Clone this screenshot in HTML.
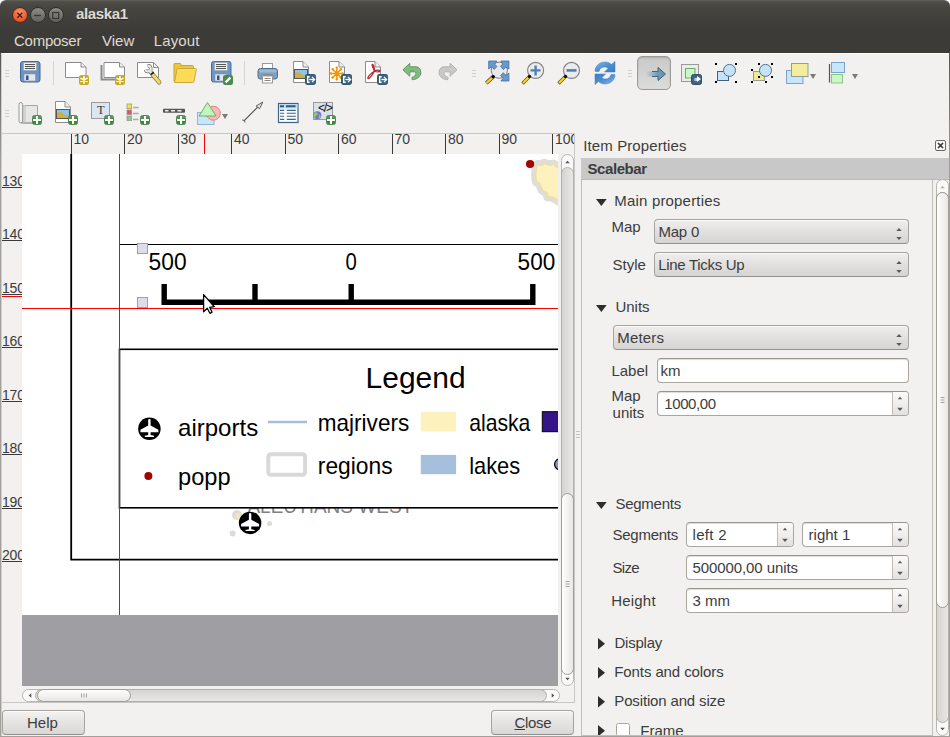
<!DOCTYPE html>
<html>
<head>
<meta charset="utf-8">
<title>alaska1</title>
<style>
html,body{margin:0;padding:0;}
body{width:950px;height:737px;overflow:hidden;position:relative;background:#f2f1f0;font-family:"Liberation Sans",sans-serif;font-size:15px;color:#3c3c3c;}
.abs,.abs *{position:absolute;}
div,span,svg{position:absolute;box-sizing:border-box;}
.t{white-space:nowrap;line-height:18px;}
/* title + menu */
#titlebar{left:0;top:0;width:950px;height:28px;background:linear-gradient(#fff 0,#fff 8px,#3d3c38 8px);}
#menubar{left:0;top:28px;width:950px;height:25px;background:#3c3b37;}
#cornerL{left:0;top:0;width:6px;height:6px;background:#1a1a18;}
#titlebar .r{left:0;top:0;width:950px;height:28px;border-radius:6px 6px 0 0;background:linear-gradient(#504f4a 0,#474641 20%,#3d3c38 100%);border-top:1px solid #5e5d58;}
.wbtn{width:16px;height:16px;border-radius:8px;top:6.500px;border:1px solid #2f2e2b;}
.mt{color:#dfdbd2;}
/* panel widgets */
.combo{height:25px;border:1px solid #a5a4a1;border-bottom-color:#929190;border-radius:4px;background:linear-gradient(#f0efee,#e3e2e1 45%,#d5d4d3);box-shadow:inset 0 1px 0 #fafafa;}
.edit{height:25px;border:1px solid #a9a6a0;border-top-color:#98958f;border-radius:4px;background:#fff;box-shadow:inset 0 1px 1px #dedbd7;}
.btn{height:25px;border:1px solid #a5a4a1;border-bottom-color:#929190;border-radius:4px;background:linear-gradient(#f4f3f2,#e6e5e4 45%,#d9d8d7);box-shadow:inset 0 1px 0 #fcfcfc;}

.hdl{width:4px;height:8px;background:linear-gradient(#cfcecb 0,#cfcecb 1px,transparent 1px,transparent 3px,#cfcecb 3px,#cfcecb 4px,transparent 4px,transparent 6px,#cfcecb 6px,#cfcecb 7px,transparent 7px);}
.sep{width:1px;height:24px;background:#d6d4d1;}
.bdg{width:10px;height:10px;border-radius:2.500px;}
.bdg::before,.bdg::after{content:"";position:absolute;}
.bdg.plus{background:linear-gradient(#5f9a5f,#468246 60%);border:1px solid #4a864a;}
.bdg.plus::before{left:3px;top:0;width:2px;height:8px;background:#fff;}
.bdg.plus::after{left:0;top:3px;width:8px;height:2px;background:#fff;}
.bdg.star{background:#c9a818;border:1px solid #b89810;}
.bdg.star::before{left:3.500px;top:1px;width:1.400px;height:6px;background:#fff;box-shadow:0 0 0 0 #fff;}
.bdg.star::after{left:1px;top:3.300px;width:6px;height:1.400px;background:#fff;}
.bdg.edit{height:25px;border:1px solid #a9a6a0;border-top-color:#98958f;border-radius:4px;background:#fff;box-shadow:inset 0 1px 1px #dedbd7;}
.bdg.edit::before{left:.5px;top:2.800px;width:7px;height:2.400px;background:#fff;transform:rotate(-45deg);}
.bdg.exp{width:11px;height:11px;background:#3f627e;border:1px solid #2f4e66;}
.bdg.exp::before{left:1.500px;top:2px;width:3px;height:5px;border:1.200px solid #fff;border-right:none;box-sizing:border-box;}
.bdg.exp::after{left:3.500px;top:3.900px;width:5px;height:1.200px;background:#fff;}
.bdg.mv{width:11px;height:11px;background:#3f627e;border:1px solid #2f4e66;}
.bdg.mv::before{left:1.500px;top:3px;width:4px;height:3px;background:linear-gradient(90deg,#7f9db5,#fff);}
.bdg.mv::after{left:5px;top:1px;width:0;height:0;border-left:4px solid #fff;border-top:3.500px solid transparent;border-bottom:3.500px solid transparent;}
.dd{width:0;height:0;border-left:3.500px solid transparent;border-right:3.500px solid transparent;border-top:5px solid #7c7b78;}
</style>
</head>
<body>

<div id="titlebar"><div class="r"></div>
<div class="wbtn" style="left:12px;background:radial-gradient(circle at 50% 30%,#f7936b,#ea5a30 65%,#d2451f);border-color:#5a2a1a"></div>
<div class="wbtn" style="left:30px;background:linear-gradient(#8d8c86,#62615c);"></div>
<div class="wbtn" style="left:48px;background:linear-gradient(#8d8c86,#62615c);"></div>
<svg style="left:12px;top:6.500px" width="54" height="17" viewBox="0 0 54 17"><path d="M5.300 5.800l5 5M10.300 5.800l-5 5" stroke="#4a1a0c" stroke-width="1.300"/><path d="M22 8.500h7" stroke="#3a3935" stroke-width="1.400"/><rect x="40.700" y="5.500" width="6" height="6" fill="none" stroke="#3a3935" stroke-width="1.300"/></svg>
<span class="t" style="left:76px;top:5px;font-size:15px;line-height:18px;color:#dfdbd2;font-weight:bold;letter-spacing:-0.35px;text-shadow:0 1px 0 #2a2926;">alaska1</span>
</div>
<div id="menubar">
<span class="t" style="left:14px;top:4px;font-size:15px;line-height:18px;color:#dfdbd2;letter-spacing:-0.25px;">Composer</span>
<span class="t" style="left:102px;top:4px;font-size:15px;line-height:18px;color:#dfdbd2;">View</span>
<span class="t" style="left:153.8px;top:4px;font-size:15px;line-height:18px;color:#dfdbd2;letter-spacing:0.1px;">Layout</span>
</div>

<div id="toolbars" style="left:0;top:53px;width:950px;height:80px;">
<!-- row 1 -->
<div class="hdl" style="left:5px;top:17px"></div>
<!-- save -->
<svg style="left:19px;top:7px" width="24" height="24" viewBox="0 0 24 24"><rect x="1.5" y="1.5" width="19.5" height="20.5" rx="2.5" fill="#6a94c6" stroke="#3d6a9e"/><rect x="4.5" y="2.5" width="13" height="8" fill="#eeeeec" stroke="#9aa0a8" stroke-width=".6"/><path d="M6 4.5h10M6 6.5h10M6 8.500h10" stroke="#555" stroke-width="1"/><rect x="5" y="14" width="11.500" height="7" fill="#e4e6ea" stroke="#8a95a5" stroke-width=".6"/><rect x="7" y="15.500" width="2.500" height="4.500" fill="#2f5688"/></svg>
<div class="sep" style="left:53px;top:8px"></div>
<!-- new composer -->
<svg style="left:64px;top:8px" width="26" height="26" viewBox="0 0 26 26"><path d="M1.500 1.500H17l5 4.500V16.500H1.500z" fill="#fff" stroke="#8c8c8c"/><path d="M17 1.500V6h5" fill="#eee" stroke="#8c8c8c"/></svg>
<svg style="left:79px;top:22px" width="10" height="10" viewBox="0 0 10 10"><rect width="10" height="10" rx="2.200" fill="#c9a91c"/><path d="M5 1.600V8.400M2 3.300L8 6.700M8 3.300L2 6.700" stroke="#fff" stroke-width="1.500" stroke-linecap="round"/></svg>
<!-- duplicate -->
<svg style="left:100px;top:8px" width="26" height="26" viewBox="0 0 26 26"><path d="M1.500 4V18.500H20" fill="none" stroke="#8c8c8c" stroke-width="2"/><path d="M4 1.500H19.500l5 4.500V16.500H4z" fill="#fff" stroke="#8c8c8c"/><path d="M19.500 1.500V6h5" fill="#eee" stroke="#8c8c8c"/></svg>
<svg style="left:115px;top:22px" width="10" height="10" viewBox="0 0 10 10"><rect width="10" height="10" rx="2.200" fill="#c9a91c"/><path d="M5 1.600V8.400M2 3.300L8 6.700M8 3.300L2 6.700" stroke="#fff" stroke-width="1.500" stroke-linecap="round"/></svg>
<!-- manager -->
<svg style="left:136px;top:8px" width="28" height="28" viewBox="0 0 28 28"><path d="M1.500 1.500H17.500l5 5V16.500H1.500z" fill="#fff" stroke="#8c8c8c"/><path d="M17.500 1.500V6.500h5z" fill="#f4f4f4" stroke="#8c8c8c" stroke-linejoin="round"/><path d="M16.500 13.500L23.200 21.300" stroke="#8a7a3a" stroke-width="4.400" stroke-linecap="round"/><path d="M16.800 13.800L23.200 21.300" stroke="#efd773" stroke-width="3" stroke-linecap="round"/><path d="M11.500 4.840A2.800 2.800 0 1 1 9.370 8.560" fill="none" stroke="#707070" stroke-width="3.400"/><path d="M13.500 9.500L16 12.800" stroke="#707070" stroke-width="4"/><path d="M11.500 4.840A2.800 2.800 0 1 1 9.370 8.560" fill="none" stroke="#eeeeee" stroke-width="2"/><path d="M13.600 9.600L16 12.600" stroke="#e4e4e4" stroke-width="2.600"/><path d="M14.800 13.600L17.800 11.200" stroke="#222" stroke-width="1.800"/></svg>
<!-- folder -->
<svg style="left:172px;top:8px" width="26" height="26" viewBox="0 0 26 26"><path d="M2 20.500V3.500q0-1 1-1h5q1 0 1 1V4.500h11.500q1 0 1 1V20.500z" fill="#eec63c" stroke="#c4a535"/><path d="M2.500 21.500L5 8.500q.2-1 1.200-1H23.500q1 0 .8 1L22 20.500q-.2 1-1.200 1z" fill="#fbdb58" stroke="#c9ab3a"/></svg>
<!-- save template -->
<svg style="left:210px;top:7px" width="24" height="24" viewBox="0 0 24 24"><rect x="1.500" y="1.500" width="19.500" height="20.500" rx="2" fill="#6b96c8" stroke="#46709f"/><rect x="4.500" y="2.500" width="13" height="8" fill="#eeeeec" stroke="#9aa0a8" stroke-width=".6"/><path d="M6 4.500h10M6 6.500h10M6 8.500h10" stroke="#555" stroke-width="1"/><rect x="5" y="14" width="11.500" height="7" fill="#e4e6ea" stroke="#8a95a5" stroke-width=".6"/><rect x="7" y="15.500" width="2.500" height="4.500" fill="#2f5688"/></svg>
<svg style="left:223px;top:22px" width="10" height="10" viewBox="0 0 10 10"><rect width="10" height="10" rx="2.200" fill="#4d894d"/><path d="M2.600 7.400L7.400 2.600" stroke="#fff" stroke-width="2.300" stroke-linecap="butt"/></svg>
<div class="sep" style="left:244px;top:8px"></div>
<!-- print -->
<svg style="left:256px;top:8px" width="24" height="24" viewBox="0 0 24 24"><rect x="6.500" y="2.500" width="10" height="7" fill="#fff" stroke="#999"/><rect x="2" y="7.500" width="19.500" height="10.500" rx="2.500" fill="#7da0be" stroke="#4a6f92"/><rect x="3" y="8.500" width="17.500" height="3" rx="1.500" fill="#9db9d2"/><rect x="6.500" y="13" width="10" height="4" fill="#8a8a8a"/><rect x="6.500" y="15" width="10" height="7" fill="#fff" stroke="#999"/><path d="M8.500 17.500h6M8.500 19.500h6" stroke="#888" stroke-width="1"/></svg>
<!-- export image -->
<svg style="left:292px;top:7px" width="20" height="24" viewBox="0 0 20 24"><path d="M1.500 1.500H11l5.500 5.500V22.500H1.500z" fill="#fff" stroke="#8c8c8c"/><path d="M11 1.500V7h5.500" fill="#eee" stroke="#8c8c8c"/><rect x="2" y="9" width="14" height="10" fill="#555"/><rect x="3" y="10" width="12" height="8" fill="#8ec4f0"/><path d="M3 18V13.500q2.500-3 5 -.5t7 2.500V18z" fill="#cdb044"/></svg>
<svg style="left:305px;top:21px" width="11" height="11" viewBox="0 0 11 11"><rect width="11" height="11" rx="2.400" fill="#315874"/><rect x="1" y="1" width="9" height="9" rx="1.500" fill="#3f6580"/><path d="M4.700 2.700H2.700V8.300H4.700" fill="none" stroke="#fff" stroke-width="1.400"/><path d="M4.300 5.500H9" stroke="#fff" stroke-width="1.300"/><path d="M7 3.100L9.600 5.500L7 7.900" fill="none" stroke="#fff" stroke-width="1.300"/></svg>
<!-- export svg -->
<svg style="left:328px;top:7px" width="20" height="24" viewBox="0 0 20 24"><path d="M1.500 1.500H11l5.500 5.500V22.500H1.500z" fill="#fff" stroke="#8c8c8c"/><path d="M11 1.500V7h5.500" fill="#eee" stroke="#8c8c8c"/><g stroke="#f0960a" stroke-width="1.500" stroke-linecap="round"><path d="M8.800 7.400v12M2.800 13.400h12M4.600 9.200l8.400 8.400M13 9.200l-8.400 8.400"/></g><g fill="#f0960a"><circle cx="8.800" cy="13.400" r="2"/><circle cx="8.800" cy="7.600" r="1.200"/><circle cx="8.800" cy="19.200" r="1.200"/><circle cx="3" cy="13.400" r="1.200"/><circle cx="14.600" cy="13.400" r="1.200"/><circle cx="4.700" cy="9.300" r="1.200"/><circle cx="12.900" cy="9.300" r="1.200"/><circle cx="4.700" cy="17.500" r="1.200"/><circle cx="12.900" cy="17.500" r="1.200"/></g></svg>
<svg style="left:341px;top:21px" width="11" height="11" viewBox="0 0 11 11"><rect width="11" height="11" rx="2.400" fill="#315874"/><rect x="1" y="1" width="9" height="9" rx="1.500" fill="#3f6580"/><path d="M4.700 2.700H2.700V8.300H4.700" fill="none" stroke="#fff" stroke-width="1.400"/><path d="M4.300 5.500H9" stroke="#fff" stroke-width="1.300"/><path d="M7 3.100L9.600 5.500L7 7.900" fill="none" stroke="#fff" stroke-width="1.300"/></svg>
<!-- export pdf -->
<svg style="left:364px;top:7px" width="20" height="24" viewBox="0 0 20 24"><path d="M1.500 1.500H11l5.500 5.500V22.500H1.500z" fill="#fff" stroke="#8c8c8c"/><path d="M11 1.500V7h5.500" fill="#eee" stroke="#8c8c8c"/><path d="M10.300 11.200C9.500 8 7.300 5.400 8.200 4.500C9.400 3.800 10.600 8 10.300 11.200C12.500 10 15.600 9.700 16 10.900C15.800 12.300 12.500 12.100 10.300 11.200C9 14 5.500 19 4 18.600C3 17.500 7 13 10.300 11.200" fill="none" stroke="#b3282d" stroke-width="1.300"/></svg>
<svg style="left:377px;top:21px" width="11" height="11" viewBox="0 0 11 11"><rect width="11" height="11" rx="2.400" fill="#315874"/><rect x="1" y="1" width="9" height="9" rx="1.500" fill="#3f6580"/><path d="M4.700 2.700H2.700V8.300H4.700" fill="none" stroke="#fff" stroke-width="1.400"/><path d="M4.300 5.500H9" stroke="#fff" stroke-width="1.300"/><path d="M7 3.100L9.600 5.500L7 7.900" fill="none" stroke="#fff" stroke-width="1.300"/></svg>
<!-- undo -->
<svg style="left:401px;top:9px" width="24" height="20" viewBox="0 0 24 20"><path d="M1.900 7.800L8.800 1.300V4.800H15C18 4.800 19.900 7.500 19.900 10.500C19.900 15 15 17.700 11.200 17.700L10.800 15.500C13 14.500 14.900 13.500 14.900 11.800C14.900 10.500 14.200 9.800 13 9.800H8.800V14.300z" fill="#84b984" stroke="#5e9c5e" stroke-linejoin="round"/><path d="M9.500 8.800H13.500" stroke="#6aa56a" stroke-width="1"/></svg>
<!-- redo -->
<svg style="left:437px;top:9px" width="24" height="20" viewBox="0 0 24 20"><path transform="translate(21.900,0) scale(-1,1)" d="M1.900 7.800L8.800 1.300V4.800H15C18 4.800 19.900 7.500 19.900 10.500C19.900 15 15 17.700 11.200 17.700L10.800 15.500C13 14.500 14.900 13.500 14.900 11.800C14.900 10.500 14.200 9.800 13 9.800H8.800V14.300z" fill="#c8c8c8" stroke="#b2b2b2" stroke-linejoin="round"/></svg>
<div class="hdl" style="left:472px;top:17px"></div>
<!-- zoom full -->
<svg style="left:484px;top:6px" width="27" height="27" viewBox="0 0 27 27"><circle cx="15.300" cy="11.200" r="8.100" fill="#e9e9e9" stroke="#7d7d7d" stroke-width="1"/><g fill="#6a9acb" stroke="#3f6ea5" stroke-width=".8" stroke-linejoin="round"><path d="M4.700 2H12.900L10.600 5.100L12.900 7.500L10.200 10.400L7.600 7.800L4.700 10z"/><path d="M24.900 2H16.900L18.600 5.100L16.500 7.300L19.400 10.600L21.600 8.200L24.900 10z"/><path d="M24.900 22V14.100L21.600 16.500L19.400 13.700L16.500 16.500L19.200 19.200L16.900 22z"/></g><path d="M9 17.900L2.300 24.200" stroke="#3b3b50" stroke-width="3.800"/><path d="M8.600 18.300L2.600 23.900" stroke="#ffd21f" stroke-width="2.400"/><circle cx="9.200" cy="17.700" r="1.700" fill="#000"/></svg>
<!-- zoom in -->
<svg style="left:520px;top:6px" width="27" height="27" viewBox="0 0 27 27"><circle cx="15.600" cy="11.400" r="8" fill="#ebebeb" stroke="#808080" stroke-width="1.100"/><path d="M15.600 6.500v10M10.500 11.400h10" stroke="#4d7fb8" stroke-width="2.400"/><path d="M9.300 17.600L2.500 24.500" stroke="#4a4a3a" stroke-width="3.400"/><path d="M9 18L3 24" stroke="#ffd21f" stroke-width="2.200"/><circle cx="9.500" cy="17.500" r="1.700" fill="#111"/></svg>
<!-- zoom out -->
<svg style="left:556px;top:6px" width="27" height="27" viewBox="0 0 27 27"><circle cx="15.500" cy="11.400" r="8" fill="#ebebeb" stroke="#808080" stroke-width="1.100"/><path d="M10.500 11.400h10" stroke="#4d7fb8" stroke-width="2.600"/><path d="M9.300 17.600L2.500 24.500" stroke="#4a4a3a" stroke-width="3.400"/><path d="M9 18L3 24" stroke="#ffd21f" stroke-width="2.200"/><circle cx="9.500" cy="17.500" r="1.700" fill="#111"/></svg>
<!-- refresh -->
<svg style="left:593px;top:7px" width="24" height="26" viewBox="0 0 24 26"><defs><linearGradient id="rg1" x1="0" y1="0" x2="1" y2="1"><stop offset="0" stop-color="#8bb9e8"/><stop offset=".5" stop-color="#4f8fd3"/><stop offset="1" stop-color="#3a7cc6"/></linearGradient><linearGradient id="rg2" x1="1" y1="1" x2="0" y2="0"><stop offset="0" stop-color="#8bb9e8"/><stop offset=".5" stop-color="#4f8fd3"/><stop offset="1" stop-color="#3a7cc6"/></linearGradient></defs><path d="M2 11.500C2 5 7.500 2 12 2c3 0 5 1 6.500 2.500L22 1.500v10.500H11.500L15 8.500c-1-1-2-1.500-3.500-1.500C8.500 7 6.500 9 6 11.500z" fill="url(#rg1)" stroke="#3f7fc4" stroke-width=".5"/><path d="M22 14.500C22 21 16.500 24 12 24c-3 0-5-1-6.500-2.500L2 24.500V14H12.500L9 17.500c1 1 2 1.500 3.500 1.500 3 0 5-2 5.500-4.500z" fill="url(#rg2)" stroke="#3f7fc4" stroke-width=".5"/></svg>
<div class="hdl" style="left:628px;top:17px"></div>
<!-- pan pressed -->
<div style="left:637px;top:3px;width:34px;height:34px;border:1px solid #9c9b97;border-radius:5px;background:linear-gradient(#c9c9c7,#dcdcda);box-shadow:inset 0 1px 2px rgba(0,0,0,.15)"></div>
<svg style="left:644px;top:12px" width="24" height="18" viewBox="0 0 24 18"><defs><linearGradient id="pg" x1="0" x2="1" y1="0" y2="0"><stop offset="0" stop-color="#7fa3bd" stop-opacity="0"/><stop offset=".6" stop-color="#7099b6"/><stop offset="1" stop-color="#6590ae"/></linearGradient></defs><path d="M1.500 6.500H14V2.500L21.500 9 14 15.500V11.500H1.500z" fill="url(#pg)"/><path d="M8 6.500H14V2.500L21.500 9 14 15.500V11.500H8" fill="none" stroke="#3f6481" stroke-width="1"/></svg>
<!-- move content -->
<svg style="left:680px;top:10px" width="24" height="24" viewBox="0 0 24 24"><rect x="1.500" y="1.500" width="17" height="17" fill="#ebebeb" stroke="#9a9a9a"/><rect x="5.500" y="5.500" width="9.500" height="9.500" fill="#c9f7c5" stroke="#6ab063"/></svg>
<div class="bdg mv" style="left:691px;top:21px"></div>
<!-- select -->
<svg style="left:714px;top:9px" width="24" height="24" viewBox="0 0 24 24"><rect x="3.500" y="9.500" width="11" height="9" fill="#c6e2f7" stroke="#3f6481"/><circle cx="15.500" cy="8.400" r="6" fill="#c6e2f7" stroke="#4d7391"/><path d="M1 1h2v2H1zM21 1h2v2h-2zM1 19h2v2H1zM21 19h2v2h-2z" fill="#000"/></svg>
<svg style="left:750px;top:9px" width="24" height="24" viewBox="0 0 24 24"><rect x="3.500" y="9.500" width="11" height="9" fill="#eeea98" stroke="#9a9a9a"/><circle cx="15.500" cy="8.400" r="6" fill="#c6e2f7" stroke="#4d7391"/><path d="M8 1h2v2H8zM21 1h2v2h-2zM1 7h2v2H1zM8 14h2v2H8zM21 14h2v2h-2zM1 19h2v2H1zM15 19h2v2h-2z" fill="#000"/></svg>
<!-- raise -->
<svg style="left:785px;top:9px" width="24" height="24" viewBox="0 0 24 24"><rect x="1.500" y="8.500" width="16.500" height="13" fill="#c9e5fa" stroke="#7aa5c8"/><rect x="6.500" y="1.500" width="16.500" height="13" fill="#f3ee9c" stroke="#999"/></svg>
<div class="dd" style="left:810px;top:21px"></div>
<!-- align -->
<svg style="left:827px;top:8px" width="20" height="24" viewBox="0 0 20 24"><path d="M2.500 3v18.500" stroke="#555" stroke-width="1.200"/><rect x="4.500" y="1.500" width="13" height="10" fill="#c9e5fa" stroke="#7aa5c8"/><rect x="4.500" y="13.500" width="11" height="8.500" fill="#c9f7c5" stroke="#8cc487"/></svg>
<div class="dd" style="left:852px;top:21px"></div>

<!-- row 2 -->
<div class="hdl" style="left:5px;top:57px"></div>
<!-- add map -->
<svg style="left:17px;top:48px" width="24" height="24" viewBox="0 0 24 24"><path d="M5.500 4.500H20.500V22H5.500z" fill="#e6e6e6" stroke="#a5a5a5"/><path d="M5.500 4.500H9V22H5.500z" fill="#d2d2d2"/><path d="M2 3.500a1.800 2 0 0 1 3.600 0V20a1.800 1.800 0 1 1-3.600 0z" fill="#f4f4f4" stroke="#999"/><path d="M3.800 22H20.500" stroke="#999"/></svg>
<div class="bdg plus" style="left:32px;top:62px"></div>
<!-- add image -->
<svg style="left:54px;top:47px" width="20" height="24" viewBox="0 0 20 24"><path d="M1.500 1.500H11l5.500 5.500V22.500H1.500z" fill="#fff" stroke="#8c8c8c"/><path d="M11 1.500V7h5.500" fill="#eee" stroke="#8c8c8c"/><rect x="2" y="9" width="14" height="10" fill="#555"/><rect x="3" y="10" width="12" height="8" fill="#8ec4f0"/><path d="M3 18V13.500q2.500-3 5 -.5t7 2.500V18z" fill="#cdb044"/></svg>
<div class="bdg plus" style="left:68px;top:62px"></div>
<!-- add label -->
<div style="left:91px;top:49px;width:19px;height:17px;background:#dbe6f1;border:1px solid #9a9a9a"></div>
<span class="t" style="left:97px;top:50px;font-family:'Liberation Serif',serif;font-size:12.500px;color:#3a3a3a;line-height:15px">T</span>
<div class="bdg plus" style="left:104px;top:62px"></div>
<!-- add legend -->
<svg style="left:126px;top:50px" width="16" height="20" viewBox="0 0 16 20"><rect x="1" y="1" width="4.600" height="4.600" fill="#f4ea28" stroke="#999" stroke-width=".8"/><rect x="1" y="7" width="4.600" height="4.600" fill="#e3545a" stroke="#999" stroke-width=".8"/><rect x="1" y="13" width="4.600" height="4.600" fill="#8fc98a" stroke="#999" stroke-width=".8"/><path d="M7 4.500h5.500M7 10.500h5.500M7 16.500h5.500" stroke="#aaa" stroke-width="1.600"/></svg>
<div class="bdg plus" style="left:140px;top:62px"></div>
<!-- add scalebar -->
<svg style="left:162px;top:55px" width="24" height="6" viewBox="0 0 24 6"><rect x="1" y=".8" width="22" height="4" rx=".8" fill="#555"/><path d="M3 2.800h3.500M9 2.800h4M15.500 2.800h4" stroke="#eee" stroke-width="1.600"/></svg>
<div class="bdg plus" style="left:176px;top:62px"></div>
<!-- add shape -->
<svg style="left:196px;top:47px" width="26" height="26" viewBox="0 0 26 26"><rect x="1.500" y="12.500" width="16.500" height="12" fill="#c9e5fa" stroke="#8db6d8"/><circle cx="17.300" cy="13.200" r="7" fill="#f9b8b8" stroke="#e88080"/><path d="M11.500 2.500L20 16H3z" fill="#c3f5bf" stroke="#6ab063" stroke-linejoin="round"/></svg>
<div class="dd" style="left:222px;top:61px"></div>
<!-- add arrow -->
<svg style="left:240px;top:46px" width="26" height="26" viewBox="0 0 26 26"><path d="M4.200 21.600L18 7.800" stroke="#4a4a4a" stroke-width="1.100"/><path d="M22.800 3L19.600 9.700L16.200 7z" fill="#e8e8e8" stroke="#4a4a4a" stroke-width=".9" stroke-linejoin="round"/><path d="M2.200 21L4.400 21.400L5 23.600" fill="none" stroke="#4a4a4a" stroke-width=".9"/></svg>
<!-- table -->
<svg style="left:277px;top:49px" width="22" height="22" viewBox="0 0 22 22"><rect x="1.500" y="1.500" width="19.500" height="19" fill="#f8fbff" stroke="#3f6481" stroke-width="1.200"/><rect x="2" y="2" width="18.500" height="4.500" fill="#b9dcf7"/><path d="M3 4.200h4M9 4.200h9.500" stroke="#355a78" stroke-width="2"/><path d="M3 8.400h4.200M9.800 8.400h9M3 11.300h4.200M9.800 11.300h9M3 14.300h4.200M9.800 14.300h9M3 17.400h4.200M9.800 17.400h9" stroke="#3f6481" stroke-width="1.100"/></svg>
<!-- html -->
<div style="left:313px;top:49px;width:20px;height:18px;background:#d9e2ec;border:1px solid #9a9a9a"></div>
<span class="t" style="left:318px;top:49px;font-size:12px;color:#111;line-height:13px;letter-spacing:-1.200px">&lt;/&gt;</span>
<svg style="left:313px;top:58px" width="9" height="9" viewBox="0 0 9 9"><circle cx="4.300" cy="4.300" r="4" fill="#7a6fd0"/><path d="M1 2.500q2-2 3.500-.5t-1 2.500 0 3.500q-2.500-.5-3-3z" fill="#7fd45a"/><path d="M6 3q2 1 1.500 3t-2 1.500z" fill="#7fd45a"/></svg>
<div class="bdg plus" style="left:326px;top:62px"></div>
</div>
<div style="left:1px;top:133px;width:574px;height:1px;background:#c9c7c3"></div>
<div style="left:71px;top:134px;width:1px;height:20px;background:#3a3a3a"></div>
<div style="left:124px;top:134px;width:1px;height:20px;background:#3a3a3a"></div>
<div style="left:178px;top:134px;width:1px;height:20px;background:#3a3a3a"></div>
<div style="left:231px;top:134px;width:1px;height:20px;background:#3a3a3a"></div>
<div style="left:285px;top:134px;width:1px;height:20px;background:#3a3a3a"></div>
<div style="left:338px;top:134px;width:1px;height:20px;background:#3a3a3a"></div>
<div style="left:392px;top:134px;width:1px;height:20px;background:#3a3a3a"></div>
<div style="left:445px;top:134px;width:1px;height:20px;background:#3a3a3a"></div>
<div style="left:499px;top:134px;width:1px;height:20px;background:#3a3a3a"></div>
<div style="left:552px;top:134px;width:1px;height:20px;background:#3a3a3a"></div>
<div style="left:204px;top:134px;width:1px;height:20px;background:#ff0000"></div>
<div style="left:22px;top:134px;width:552px;height:20px;overflow:hidden">
<span class="t" style="left:51.5px;top:-3px;font-size:14px;line-height:17px;color:#3c3c3c;">10</span>
<span class="t" style="left:105.0px;top:-3px;font-size:14px;line-height:17px;color:#3c3c3c;">20</span>
<span class="t" style="left:158.5px;top:-3px;font-size:14px;line-height:17px;color:#3c3c3c;">30</span>
<span class="t" style="left:212.0px;top:-3px;font-size:14px;line-height:17px;color:#3c3c3c;">40</span>
<span class="t" style="left:265.5px;top:-3px;font-size:14px;line-height:17px;color:#3c3c3c;">50</span>
<span class="t" style="left:319.0px;top:-3px;font-size:14px;line-height:17px;color:#3c3c3c;">60</span>
<span class="t" style="left:372.5px;top:-3px;font-size:14px;line-height:17px;color:#3c3c3c;">70</span>
<span class="t" style="left:426.0px;top:-3px;font-size:14px;line-height:17px;color:#3c3c3c;">80</span>
<span class="t" style="left:479.5px;top:-3px;font-size:14px;line-height:17px;color:#3c3c3c;">90</span>
<span class="t" style="left:533.0px;top:-3px;font-size:14px;line-height:17px;color:#3c3c3c;">100</span>
</div>
<div style="left:2px;top:154px;width:20px;height:461px;overflow:hidden">
<div style="left:0;top:33px;width:20px;height:1px;background:#3a3a3a"></div>
<span class="t" style="left:0px;top:19px;font-size:14px;line-height:17px;color:#3c3c3c;letter-spacing:-0.2px;">130</span>
<div style="left:0;top:86px;width:20px;height:1px;background:#3a3a3a"></div>
<span class="t" style="left:0px;top:72px;font-size:14px;line-height:17px;color:#3c3c3c;letter-spacing:-0.2px;">140</span>
<div style="left:0;top:140px;width:20px;height:1px;background:#3a3a3a"></div>
<span class="t" style="left:0px;top:126px;font-size:14px;line-height:17px;color:#3c3c3c;letter-spacing:-0.2px;">150</span>
<div style="left:0;top:193px;width:20px;height:1px;background:#3a3a3a"></div>
<span class="t" style="left:0px;top:179px;font-size:14px;line-height:17px;color:#3c3c3c;letter-spacing:-0.2px;">160</span>
<div style="left:0;top:247px;width:20px;height:1px;background:#3a3a3a"></div>
<span class="t" style="left:0px;top:233px;font-size:14px;line-height:17px;color:#3c3c3c;letter-spacing:-0.2px;">170</span>
<div style="left:0;top:300px;width:20px;height:1px;background:#3a3a3a"></div>
<span class="t" style="left:0px;top:286px;font-size:14px;line-height:17px;color:#3c3c3c;letter-spacing:-0.2px;">180</span>
<div style="left:0;top:354px;width:20px;height:1px;background:#3a3a3a"></div>
<span class="t" style="left:0px;top:340px;font-size:14px;line-height:17px;color:#3c3c3c;letter-spacing:-0.2px;">190</span>
<div style="left:0;top:407px;width:20px;height:1px;background:#3a3a3a"></div>
<span class="t" style="left:0px;top:393px;font-size:14px;line-height:17px;color:#3c3c3c;letter-spacing:-0.2px;">200</span>
</div>
<div style="left:2px;top:296px;width:20px;height:1px;background:#ff0000"></div>
<svg style="left:22px;top:154px" width="536" height="532" viewBox="22 154 536 532">
<rect x="22" y="154" width="536" height="461" fill="#fff"/>
<rect x="22" y="615" width="536" height="71" fill="#9f9ea3"/>
<!-- island -->
<g stroke-linejoin="round"><path id="isl" d="M537.500 165.400L541.500 166.500L544 164.200L550.300 166.300L553 165L559 169.500V200L553 196.200L548.500 196L548 192.300L543.200 189.700L540.100 182.600L537 181L536.600 174.700z" fill="#dcdcdc" stroke="#dedede" stroke-width="11"/>
<path d="M537.500 165.400L541.500 166.500L544 164.200L550.300 166.300L553 165L559 169.500V200L553 196.200L548.500 196L548 192.300L543.200 189.700L540.100 182.600L537 181L536.600 174.700z" fill="#fdf2be" stroke="#e8dfb9" stroke-width="5.200"/>
<path d="M537.500 165.400L541.500 166.500L544 164.200L550.300 166.300L553 165L559 169.500V200L553 196.200L548.500 196L548 192.300L543.200 189.700L540.100 182.600L537 181L536.600 174.700z" fill="#fdf2be"/></g>
<circle cx="530.1" cy="164" r="4.1" fill="#a40000"/>
<!-- page border -->
<path d="M71.200 154V559.700H558" fill="none" stroke="#000" stroke-width="1.800"/>
<!-- map frame line -->
<path d="M119.500 244.500H558" stroke="#000" stroke-width="1.100"/>
<!-- ALEUTIANS WEST -->
<text x="247.400" y="513.200" font-family='Liberation Sans, sans-serif' font-size="20.500" fill="#808080" textLength="165.800" lengthAdjust="spacingAndGlyphs">ALEUTIANS WEST</text>
<!-- small dots / airport -->
<circle cx="237" cy="515" r="5" fill="#dcdcdc"/><circle cx="238.500" cy="516" r="3" fill="#efe6c0"/>
<circle cx="232.600" cy="533.500" r="3" fill="#dcdcdc"/><circle cx="269.500" cy="523.500" r="2.600" fill="#dcdcdc"/>
<g transform="translate(250.100,522.900)"><circle r="11.250" fill="#000"/><path d="M-1.200 -9.300q1.200-1 2.400 0V-3.200L9 1V3.500H1.200V6.300L4.600 7V8.200H-4.600V7L-1.200 6.300V3.500H-9V1L-1.200 -3.200z" fill="#fff"/></g>
<!-- legend box -->
<rect x="119.500" y="349.300" width="450" height="158.500" fill="#fff" stroke="#000" stroke-width="1.600"/>
<text x="365.600" y="387.800" font-family='Liberation Sans, sans-serif' font-size="29.600" fill="#000" textLength="100" lengthAdjust="spacingAndGlyphs">Legend</text>
<g transform="translate(149.400,428.800)"><circle r="11.250" fill="#000"/><path d="M-1.200 -9.300q1.200-1 2.400 0V-3.200L9 1V3.500H1.200V6.300L4.600 7V8.200H-4.600V7L-1.200 6.300V3.500H-9V1L-1.200 -3.200z" fill="#fff"/></g>
<text x="178" y="436.100" font-family='Liberation Sans, sans-serif' font-size="24" fill="#000" textLength="80.200" lengthAdjust="spacingAndGlyphs">airports</text>
<circle cx="148.400" cy="476.100" r="4" fill="#a40000"/>
<text x="178" y="485.100" font-family='Liberation Sans, sans-serif' font-size="24" fill="#000" textLength="52.500" lengthAdjust="spacingAndGlyphs">popp</text>
<path d="M268 422H307" stroke="#a3bfd6" stroke-width="2.700"/>
<text x="317.800" y="430.500" font-family='Liberation Sans, sans-serif' font-size="24" fill="#000" textLength="91.400" lengthAdjust="spacingAndGlyphs">majrivers</text>
<rect x="268.300" y="454.200" width="36.800" height="20.600" rx="2.500" fill="#fff" stroke="#d9d9d9" stroke-width="4"/>
<text x="317.800" y="473.600" font-family='Liberation Sans, sans-serif' font-size="24" fill="#000" textLength="74.800" lengthAdjust="spacingAndGlyphs">regions</text>
<rect x="420.800" y="411.800" width="35.300" height="19.700" fill="#fdf2be"/>
<text x="469.200" y="430.500" font-family='Liberation Sans, sans-serif' font-size="24" fill="#000" textLength="61.200" lengthAdjust="spacingAndGlyphs">alaska</text>
<rect x="542.300" y="411.700" width="30" height="20" fill="#35148a" stroke="#000" stroke-width="1"/>
<rect x="420.800" y="454.900" width="35.300" height="19.300" fill="#a5bfdd"/>
<text x="469.200" y="473.600" font-family='Liberation Sans, sans-serif' font-size="24" fill="#000" textLength="51" lengthAdjust="spacingAndGlyphs">lakes</text>
<circle cx="560.200" cy="464.300" r="5.600" fill="#8094d4" stroke="#000" stroke-width="1.200"/>
<!-- scalebar -->
<text x="148.600" y="269.900" font-family='Liberation Sans, sans-serif' font-size="23.200" fill="#000" textLength="38" lengthAdjust="spacingAndGlyphs">500</text>
<text x="345.600" y="269.900" font-family='Liberation Sans, sans-serif' font-size="23.200" fill="#000" textLength="11.300" lengthAdjust="spacingAndGlyphs">0</text>
<text x="517.600" y="269.900" font-family='Liberation Sans, sans-serif' font-size="23.200" fill="#000" textLength="37.600" lengthAdjust="spacingAndGlyphs">500</text>
<path d="M164.200 284V302.200H532.800V284M255 284V302.200M351.200 284V302.200" fill="none" stroke="#000" stroke-width="5.400"/>
<!-- guides -->
<path d="M119.500 154V615M22 308.500H558" stroke="#ff0000" stroke-width="1"/>
<!-- handles -->
<rect x="137.500" y="243.500" width="10" height="10" fill="#dcdde6" stroke="#8ba7b7" stroke-width="1"/>
<rect x="137.500" y="297.500" width="10" height="10" fill="#dcdde6" stroke="#8ba7b7" stroke-width="1"/>
<!-- cursor -->
<path d="M203.600 294.600V311.800L207.300 308.300L209.900 313.300L212.100 312.200L209.700 307.300L214.300 306.700z" fill="#fff" stroke="#000" stroke-width="1.300" stroke-linejoin="round"/>
</svg>
<div style="left:561px;top:154px;width:13px;height:532px;border:1px solid #b9b6b0;border-radius:6.500px;background:#fbfafa"></div><div style="left:561px;top:167px;width:13px;height:506px;border:1px solid #b3b0aa;border-radius:6.500px;background:linear-gradient(90deg,#d6d4d1,#e9e7e5)"></div><div style="left:561px;top:493px;width:13px;height:182px;border:1px solid #a19e98;border-radius:6.500px;background:linear-gradient(90deg,#fefefe,#e9e7e5)"></div><svg style="left:561px;top:154px" width="13" height="532" viewBox="0 0 13 532"><path d="M4.200 9.300l2.300-2.600 2.300 2.600z" fill="#55544f"/><path d="M4.200 523.7l2.300 2.600 2.300-2.600z" fill="#55544f"/><path d="M4.500 427.5h4M4.500 430.0h4M4.500 432.5h4" stroke="#a5a29d" stroke-width="1"/></svg>
<div style="left:22px;top:689px;width:538px;height:13px;border:1px solid #b9b6b0;border-radius:6.500px;background:#fbfafa"></div><div style="left:35px;top:689px;width:512px;height:13px;border:1px solid #b3b0aa;border-radius:6.500px;background:linear-gradient(#d6d4d1,#e9e7e5)"></div><div style="left:37px;top:689px;width:94px;height:13px;border:1px solid #a19e98;border-radius:6.500px;background:linear-gradient(#fefefe,#e9e7e5)"></div><svg style="left:22px;top:689px" width="538" height="13" viewBox="0 0 538 13"><path d="M9.300 4.200l-2.600 2.300 2.600 2.300zM529.7 4.200l2.600 2.300-2.600 2.300z" fill="#55544f"/><path d="M59.5 4.500v4M62.0 4.500v4M64.5 4.500v4" stroke="#a5a29d" stroke-width="1"/></svg>
<div style="left:574px;top:134px;width:1px;height:568px;background:#c9c7c3"></div>
<div style="left:1px;top:702px;width:574px;height:1px;background:#c9c7c3"></div>
<div class="btn" style="left:2px;top:710px;width:83px;height:25px"></div>
<span class="t" style="left:27px;top:714px;font-size:15px;line-height:18px;">Help</span>

<div class="btn" style="left:491px;top:710px;width:83px;height:25px"></div>
<span class="t" style="left:514.5px;top:714px;font-size:15px;line-height:18px;letter-spacing:-0.3px;"><u>C</u>lose</span>

<span class="t" style="left:583.3px;top:137px;font-size:15px;line-height:18px;letter-spacing:0.1px;">Item Properties</span>

<svg style="left:935px;top:140px" width="11" height="11" viewBox="0 0 11 11"><rect x=".5" y=".5" width="10" height="10" rx="1.500" fill="#f7f7f7" stroke="#6a6a6a"/><path d="M3 3l5 5M8 3l-5 5" stroke="#3a3a3a" stroke-width="1.700"/></svg>
<div style="left:581px;top:158px;width:369px;height:21px;background:#c8c8c8"></div>
<div style="left:581px;top:179px;width:369px;height:1px;background:#bcbab6"></div>
<span class="t" style="left:587.4px;top:160px;font-size:15px;line-height:18px;font-weight:bold;letter-spacing:-0.4px;">Scalebar</span>

<div style="left:581px;top:180px;width:352px;height:556px;border:1px solid #c0beb9;border-top:none"></div>
<svg style="left:595.7px;top:199px" width="11" height="7" viewBox="0 0 11 7"><path d="M0 0h10.700l-5.350 6.900z" fill="#2d2d2d"/></svg>
<span class="t" style="left:614.3px;top:192px;font-size:15px;line-height:18px;letter-spacing:0.18px;">Main properties</span>

<span class="t" style="left:611.4px;top:218px;font-size:15px;line-height:18px;">Map</span>

<div class="combo" style="left:654px;top:219px;width:255px;height:25px"></div><svg style="left:896px;top:228px" width="6" height="12" viewBox="0 0 6 12"><path d="M.3 3l2.700-3 2.700 3z" fill="#5a5956"/><path d="M.3 9l2.700 3 2.700-3z" fill="#5a5956"/></svg>
<span class="t" style="left:658.4px;top:223px;font-size:15px;line-height:18px;letter-spacing:-0.2px;">Map 0</span>

<span class="t" style="left:612.6px;top:256px;font-size:15px;line-height:18px;">Style</span>

<div class="combo" style="left:654px;top:252px;width:255px;height:25px"></div><svg style="left:896px;top:261px" width="6" height="12" viewBox="0 0 6 12"><path d="M.3 3l2.700-3 2.700 3z" fill="#5a5956"/><path d="M.3 9l2.700 3 2.700-3z" fill="#5a5956"/></svg>
<span class="t" style="left:658.2px;top:256px;font-size:15px;line-height:18px;letter-spacing:-0.3px;">Line Ticks Up</span>

<svg style="left:595.7px;top:305px" width="11" height="7" viewBox="0 0 11 7"><path d="M0 0h10.700l-5.350 6.900z" fill="#2d2d2d"/></svg>
<span class="t" style="left:615.4px;top:298px;font-size:15px;line-height:18px;">Units</span>

<div class="combo" style="left:613px;top:325px;width:296px;height:25px"></div><svg style="left:896px;top:334px" width="6" height="12" viewBox="0 0 6 12"><path d="M.3 3l2.700-3 2.700 3z" fill="#5a5956"/><path d="M.3 9l2.700 3 2.700-3z" fill="#5a5956"/></svg>
<span class="t" style="left:617.2px;top:329px;font-size:15px;line-height:18px;letter-spacing:0.2px;">Meters</span>

<span class="t" style="left:611.4px;top:362px;font-size:15px;line-height:18px;">Label</span>

<div class="edit" style="left:657px;top:358px;width:252px;height:25px"></div>
<span class="t" style="left:660.5px;top:362px;font-size:15px;line-height:18px;">km</span>

<span class="t" style="left:611.4px;top:387px;font-size:15px;line-height:18px;">Map</span>

<span class="t" style="left:612.6px;top:404px;font-size:15px;line-height:18px;">units</span>

<div class="edit" style="left:657px;top:391px;width:252px;height:25px"></div><div style="left:892px;top:392px;width:16px;height:23px;border-left:1px solid #c1beb9;border-radius:0 3px 3px 0;background:linear-gradient(#fbfaf9,#f0efed 50%,#e2e1df)"></div><svg style="left:897.4px;top:396px" width="6" height="16" viewBox="0 0 6 16"><path d="M.8 3.200l2.200-2.500 2.200 2.500z" fill="#5a5956"/><path d="M.2 11.800l2.800 3.200 2.800-3.200z" fill="#5a5956"/></svg>
<span class="t" style="left:664.3px;top:395px;font-size:15px;line-height:18px;letter-spacing:-0.4px;">1000,00</span>

<svg style="left:595.7px;top:502px" width="11" height="7" viewBox="0 0 11 7"><path d="M0 0h10.700l-5.350 6.900z" fill="#2d2d2d"/></svg>
<span class="t" style="left:615.4px;top:495px;font-size:15px;line-height:18px;letter-spacing:-0.25px;">Segments</span>

<span class="t" style="left:612.5px;top:526px;font-size:15px;line-height:18px;letter-spacing:-0.25px;">Segments</span>

<div class="edit" style="left:686px;top:522px;width:108px;height:25px"></div><div style="left:777px;top:523px;width:16px;height:23px;border-left:1px solid #c1beb9;border-radius:0 3px 3px 0;background:linear-gradient(#fbfaf9,#f0efed 50%,#e2e1df)"></div><svg style="left:782.4px;top:527px" width="6" height="16" viewBox="0 0 6 16"><path d="M.8 3.200l2.200-2.500 2.200 2.500z" fill="#5a5956"/><path d="M.2 11.800l2.800 3.200 2.800-3.200z" fill="#5a5956"/></svg>
<span class="t" style="left:692.6px;top:526px;font-size:15px;line-height:18px;letter-spacing:0.3px;">left 2</span>

<div class="edit" style="left:802px;top:522px;width:107px;height:25px"></div><div style="left:892px;top:523px;width:16px;height:23px;border-left:1px solid #c1beb9;border-radius:0 3px 3px 0;background:linear-gradient(#fbfaf9,#f0efed 50%,#e2e1df)"></div><svg style="left:897.4px;top:527px" width="6" height="16" viewBox="0 0 6 16"><path d="M.8 3.200l2.200-2.500 2.200 2.500z" fill="#5a5956"/><path d="M.2 11.800l2.800 3.200 2.800-3.200z" fill="#5a5956"/></svg>
<span class="t" style="left:808.6px;top:526px;font-size:15px;line-height:18px;">right 1</span>

<span class="t" style="left:612.5px;top:559px;font-size:15px;line-height:18px;letter-spacing:-0.7px;">Size</span>

<div class="edit" style="left:686px;top:555px;width:223px;height:25px"></div><div style="left:892px;top:556px;width:16px;height:23px;border-left:1px solid #c1beb9;border-radius:0 3px 3px 0;background:linear-gradient(#fbfaf9,#f0efed 50%,#e2e1df)"></div><svg style="left:897.4px;top:560px" width="6" height="16" viewBox="0 0 6 16"><path d="M.8 3.200l2.200-2.500 2.200 2.500z" fill="#5a5956"/><path d="M.2 11.800l2.800 3.200 2.800-3.200z" fill="#5a5956"/></svg>
<span class="t" style="left:692.6px;top:559px;font-size:15px;line-height:18px;letter-spacing:-0.1px;">500000,00 units</span>

<span class="t" style="left:611.2px;top:592px;font-size:15px;line-height:18px;letter-spacing:0.2px;">Height</span>

<div class="edit" style="left:686px;top:588px;width:223px;height:25px"></div><div style="left:892px;top:589px;width:16px;height:23px;border-left:1px solid #c1beb9;border-radius:0 3px 3px 0;background:linear-gradient(#fbfaf9,#f0efed 50%,#e2e1df)"></div><svg style="left:897.4px;top:593px" width="6" height="16" viewBox="0 0 6 16"><path d="M.8 3.200l2.200-2.500 2.200 2.500z" fill="#5a5956"/><path d="M.2 11.800l2.800 3.200 2.800-3.200z" fill="#5a5956"/></svg>
<span class="t" style="left:692.6px;top:592px;font-size:15px;line-height:18px;">3 mm</span>

<svg style="left:598.2px;top:637.5px" width="8" height="12" viewBox="0 0 8 12"><path d="M0 0v11.500l7-5.750z" fill="#2d2d2d"/></svg>
<span class="t" style="left:614.4px;top:634px;font-size:15px;line-height:18px;letter-spacing:-0.2px;">Display</span>

<svg style="left:598.2px;top:666.5px" width="8" height="12" viewBox="0 0 8 12"><path d="M0 0v11.500l7-5.750z" fill="#2d2d2d"/></svg>
<span class="t" style="left:614.3px;top:663px;font-size:15px;line-height:18px;letter-spacing:-0.1px;">Fonts and colors</span>

<svg style="left:598.2px;top:695.5px" width="8" height="12" viewBox="0 0 8 12"><path d="M0 0v11.500l7-5.750z" fill="#2d2d2d"/></svg>
<span class="t" style="left:614.3px;top:692px;font-size:15px;line-height:18px;letter-spacing:-0.15px;">Position and size</span>

<svg style="left:598.2px;top:724.5px" width="8" height="12" viewBox="0 0 8 12"><path d="M0 0v11.500l7-5.750z" fill="#2d2d2d"/></svg>
<div style="left:616px;top:723px;width:14px;height:14px;border:1px solid #a9a49c;border-radius:2.500px;background:#fff"></div>
<span class="t" style="left:640.3px;top:722px;font-size:15px;line-height:18px;">Frame</span>

<div style="left:582px;top:735px;width:350px;height:2px;background:#f2f1f0;border-top:1px solid #c0beb9"></div>
<div style="left:936px;top:179px;width:13px;height:557px;border:1px solid #b9b6b0;border-radius:6.500px;background:#fbfafa"></div><div style="left:936px;top:192px;width:13px;height:531px;border:1px solid #b3b0aa;border-radius:6.500px;background:linear-gradient(90deg,#d6d4d1,#e9e7e5)"></div><div style="left:936px;top:192px;width:13px;height:416px;border:1px solid #a19e98;border-radius:6.500px;background:linear-gradient(90deg,#fefefe,#e9e7e5)"></div><svg style="left:936px;top:179px" width="13" height="557" viewBox="0 0 13 557"><path d="M4.200 9.300l2.300-2.600 2.300 2.600z" fill="#b4b2ae"/><path d="M4.200 548.7l2.300 2.600 2.300-2.600z" fill="#55544f"/><path d="M4.500 218.5h4M4.500 221.0h4M4.500 223.5h4" stroke="#a5a29d" stroke-width="1"/></svg>
<svg style="left:576px;top:431px" width="4" height="8" viewBox="0 0 4 8"><path d="M0 .5h4M0 3.500h4M0 6.500h4" stroke="#c4c2be"/></svg>
<div style="left:0;top:53px;width:1px;height:684px;background:linear-gradient(#55544f 0,#a3a09b 110px)"></div><div style="left:1px;top:54px;width:1px;height:682px;background:#d0cecb"></div><div style="left:949px;top:53px;width:1px;height:684px;background:linear-gradient(#55544f 0,#a3a09b 110px)"></div><div style="left:0;top:736px;width:950px;height:1px;background:#a3a09b"></div><div style="left:1px;top:53px;width:948px;height:1px;background:#fbfbfa"></div>
</body>
</html>
